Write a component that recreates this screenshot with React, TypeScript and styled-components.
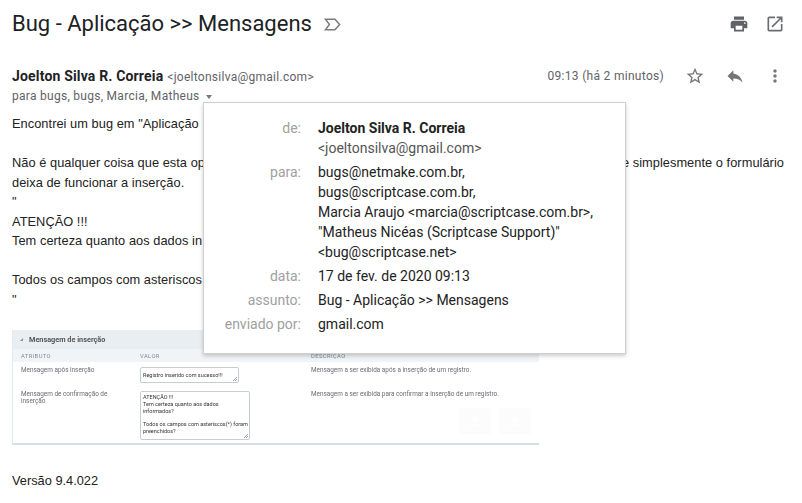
import React from 'react'
import styled, { createGlobalStyle } from 'styled-components'

const GlobalStyle = createGlobalStyle`
    html, body {
        margin: 0;
        padding: 0;
        background: #fff;
    }
`

const Icon: React.FC<{ d: string; color?: string }> = ({ d, color = '#5f6368' }) => (
    <svg width="20" height="20" viewBox="0 0 24 24" fill={color}>
        <path d={d} />
    </svg>
)

const printPath = 'M19 8H5c-1.66 0-3 1.34-3 3v6h4v4h12v-4h4v-6c0-1.66-1.34-3-3-3zm-3 11H8v-5h8v5zm3-7c-.55 0-1-.45-1-1s.45-1 1-1 1 .45 1 1-.45 1-1 1zm-1-9H6v4h12V3z'
const openPath = 'M19 19H5V5h7V3H5c-1.11 0-2 .9-2 2v14c0 1.1.89 2 2 2h14c1.1 0 2-.9 2-2v-7h-2v7zM14 3v2h3.59l-9.83 9.83 1.41 1.41L19 6.41V10h2V3h-7z'
const starPath = 'M22 9.24l-7.19-.62L12 2 9.19 8.63 2 9.24l5.46 4.73L5.82 21 12 17.27 18.18 21l-1.63-7.03L22 9.24zM12 15.4l-3.76 2.27 1-4.28-3.32-2.88 4.38-.38L12 6.1l1.71 4.04 4.38.38-3.32 2.88 1 4.28L12 15.4z'
const replyPath = 'M10 9V5l-7 7 7 7v-4.1c5 0 8.5 1.6 11 5.1-1-5-4-10-11-11z'
const morePath = 'M12 8c1.1 0 2-.9 2-2s-.9-2-2-2-2 .9-2 2 .9 2 2 2zm0 2c-1.1 0-2 .9-2 2s.9 2 2 2 2-.9 2-2-.9-2-2-2zm0 6c-1.1 0-2 .9-2 2s.9 2 2 2 2-.9 2-2-.9-2-2-2z'

const App: React.FC = () => {
    return (
        <Page>
            <GlobalStyle />
            <TitleRow>
                <Title>Bug - Aplicação &gt;&gt; Mensagens</Title>
                <LabelMark width="17" height="13" viewBox="0 0 17 13">
                    <path d="M1.5 1.2h9.5l4.6 5.3-4.6 5.3H1.5l3.9-5.3z" fill="none" stroke="#7c7c7c" strokeWidth="1.5" />
                </LabelMark>
                <TitleActions>
                    <Icon d={printPath} />
                    <Icon d={openPath} color="#6a6e72" />
                </TitleActions>
            </TitleRow>

            <SenderRow>
                <SenderInfo>
                    <SenderLine>
                        <SenderName>Joelton Silva R. Correia</SenderName>
                        <SenderMail>&lt;joeltonsilva@gmail.com&gt;</SenderMail>
                    </SenderLine>
                    <ToLine>
                        para bugs, bugs, Marcia, Matheus
                        <Caret />
                    </ToLine>
                </SenderInfo>
                <Time>09:13 (há 2 minutos)</Time>
                <MessageActions>
                    <Icon d={starPath} color="#767676" />
                    <Icon d={replyPath} color="#767676" />
                    <Icon d={morePath} color="#767676" />
                </MessageActions>
            </SenderRow>

            <Body>
                <Line>Encontrei um bug em "Aplicação</Line>
                <Line>&nbsp;</Line>
                <SplitLine>
                    <span>Não é qualquer coisa que esta op</span>
                    <span>e simplesmente o formulário</span>
                </SplitLine>
                <Line>deixa de funcionar a inserção.</Line>
                <Line>"</Line>
                <Line>ATENÇÃO !!!</Line>
                <Line>Tem certeza quanto aos dados in</Line>
                <Line>&nbsp;</Line>
                <Line>Todos os campos com asteriscos</Line>
                <Line>"</Line>
            </Body>

            <Shot>
                <ShotTitle>
                    <ShotArrow />
                    Mensagem de inserção
                </ShotTitle>
                <ShotHead>
                    <span>ATRIBUTO</span>
                    <span>VALOR</span>
                    <span>DESCRIÇÃO</span>
                </ShotHead>
                <ShotRow>
                    <ShotLabel>Mensagem após inserção</ShotLabel>
                    <ShotArea>Registro inserido com sucesso!!!</ShotArea>
                    <ShotLabel>Mensagem a ser exibida após a inserção de um registro.</ShotLabel>
                </ShotRow>
                <ShotRow>
                    <ShotLabel>Mensagem de confirmação de inserção</ShotLabel>
                    <ShotArea $tall>
                        ATENÇÃO !!!<br />
                        Tem certeza quanto aos dados<br />
                        informados?<br />
                        <br />
                        Todos os campos com asteriscos(*) foram<br />
                        preenchidos?
                    </ShotArea>
                    <ShotLabel>Mensagem a ser exibida para confirmar a inserção de um registro.</ShotLabel>
                </ShotRow>
                <FaintTiles>
                    <FaintTile>
                        <svg width="14" height="14" viewBox="0 0 24 24" fill="#fff">
                            <path d="M19 9h-4V3H9v6H5l7 7 7-7zM5 18v2h14v-2H5z" />
                        </svg>
                    </FaintTile>
                    <FaintTile>
                        <svg width="14" height="14" viewBox="0 0 24 24" fill="#fff">
                            <path d="M9 16h6v-6h4l-7-7-7 7h4zm-4 2h14v2H5z" />
                        </svg>
                    </FaintTile>
                </FaintTiles>
            </Shot>

            <Version>Versão 9.4.022</Version>

            <Popup>
                <PopLabel>de:</PopLabel>
                <PopValue>
                    <strong>Joelton Silva R. Correia</strong>
                    <br />
                    <PopMuted>&lt;joeltonsilva@gmail.com&gt;</PopMuted>
                </PopValue>
                <PopLabel>para:</PopLabel>
                <PopValue>
                    bugs@netmake.com.br,<br />
                    bugs@scriptcase.com.br,<br />
                    Marcia Araujo &lt;marcia@scriptcase.com.br&gt;,<br />
                    "Matheus Nicéas (Scriptcase Support)"<br />
                    &lt;bug@scriptcase.net&gt;
                </PopValue>
                <PopLabel>data:</PopLabel>
                <PopValue>17 de fev. de 2020 09:13</PopValue>
                <PopLabel>assunto:</PopLabel>
                <PopValue>Bug - Aplicação &gt;&gt; Mensagens</PopValue>
                <PopLabel>enviado por:</PopLabel>
                <PopValue>gmail.com</PopValue>
            </Popup>
        </Page>
    )
}

export default App

const Page = styled.div`
    position: relative;
    width: 802px;
    height: 503px;
    overflow: hidden;
    background: #fff;
    font-family: Roboto, "Liberation Sans", sans-serif;
    color: #222;
`

const TitleRow = styled.div`
    display: flex;
    align-items: center;
    height: 28px;
    padding: 10px 17px 0 12px;
`

const Title = styled.h1`
    margin: 0;
    font-size: 22px;
    font-weight: 400;
    line-height: 28px;
    color: #202124;
`

const LabelMark = styled.svg`
    margin-left: 12px;
`

const TitleActions = styled.div`
    display: flex;
    gap: 16px;
    margin-left: auto;
`

const SenderRow = styled.div`
    display: flex;
    align-items: flex-start;
    margin-top: 28px;
    padding: 0 17px 0 12px;
`

const SenderInfo = styled.div`
    flex: 1;
`

const SenderLine = styled.div`
    display: flex;
    align-items: baseline;
    gap: 4px;
    height: 20px;
    line-height: 20px;
`

const SenderName = styled.span`
    font-size: 14px;
    font-weight: 700;
    letter-spacing: 0.17px;
    color: #202124;
`

const SenderMail = styled.span`
    font-size: 12px;
    letter-spacing: 0.27px;
    color: #5f6368;
`

const ToLine = styled.div`
    display: flex;
    align-items: center;
    height: 20px;
    font-size: 12px;
    letter-spacing: 0.28px;
    color: #5f6368;
`

const Caret = styled.span`
    width: 0;
    height: 0;
    margin: 1px 0 0 6px;
    border-left: 3.5px solid transparent;
    border-right: 3.5px solid transparent;
    border-top: 4px solid #777;
`

const Time = styled.div`
    font-size: 12px;
    letter-spacing: 0.3px;
    line-height: 20px;
    color: #5f6368;
`

const MessageActions = styled.div`
    display: flex;
    gap: 20px;
    margin-left: 21px;
`

const Body = styled.div`
    margin-top: 8px;
    padding-left: 12px;
    font-family: "Liberation Sans", Arial, sans-serif;
    font-size: 12.8px;
    letter-spacing: 0.05px;
    line-height: 19.5px;
    color: #222;
`

const Line = styled.div`
    white-space: nowrap;
`

const SplitLine = styled(Line)`
    display: flex;
    justify-content: space-between;
    width: 772px;
`

const Shot = styled.div`
    position: relative;
    width: 527px;
    height: 115px;
    margin: 21px 0 0 12px;
    box-sizing: border-box;
    border-bottom: 2px solid #d6dfe8;
    border-left: 1px solid #e4e9ee;
    font-size: 6.4px;
    color: #4b4b55;
    filter: blur(0.25px);
`

const ShotTitle = styled.div`
    display: flex;
    align-items: center;
    gap: 6px;
    height: 19px;
    padding-left: 7px;
    background: #e9eef3;
    font-size: 7.3px;
    font-weight: 700;
    color: #555;
`

const ShotArrow = styled.span`
    width: 0;
    height: 0;
    border-left: 3px solid transparent;
    border-bottom: 3px solid #8a8f95;
`

const ShotHead = styled.div`
    display: grid;
    grid-template-columns: 119px 171px 1fr;
    align-items: center;
    height: 13px;
    padding-left: 8px;
    background: #f1f4f7;
    font-size: 5.8px;
    letter-spacing: 0.4px;
    color: #7d8b9b;
`

const ShotRow = styled.div`
    display: grid;
    grid-template-columns: 119px 171px 1fr;
    align-items: start;
    padding: 5px 0 0 8px;
    margin-bottom: 3px;
`

const ShotLabel = styled.div`
    width: 100%;
    max-width: 190px;
    line-height: 7.4px;
    color: #6a6a75;

    &:first-child {
        max-width: 92px;
    }

    &:last-child {
        max-width: none;
        white-space: nowrap;
    }
`

const ShotArea = styled.div<{ $tall?: boolean }>`
    position: relative;
    box-sizing: border-box;
    width: ${(p) => (p.$tall ? '110px' : '99px')};
    height: ${(p) => (p.$tall ? '49px' : '16px')};
    padding: ${(p) => (p.$tall ? '2px 2px' : '4px 2px')};
    border: 1px solid #c6ccd2;
    border-radius: 2px;
    background: #fff;
    font-size: 5.5px;
    line-height: 6.8px;
    white-space: nowrap;
    color: #333;

    &::after {
        content: '';
        position: absolute;
        right: 1px;
        bottom: 1px;
        width: 5px;
        height: 5px;
        background: linear-gradient(135deg, transparent 55%, #9aa0a6 55%, #9aa0a6 65%, transparent 65%, transparent 78%, #9aa0a6 78%, #9aa0a6 88%, transparent 88%);
    }
`

const FaintTiles = styled.div`
    position: absolute;
    right: 8px;
    bottom: 9px;
    display: flex;
    gap: 8px;
`

const FaintTile = styled.div`
    display: flex;
    align-items: center;
    justify-content: center;
    width: 32px;
    height: 26px;
    border-radius: 2px;
    background: #fcfcfc;
`

const Version = styled.div`
    margin: 26px 0 0 12px;
    font-family: "Liberation Sans", Arial, sans-serif;
    font-size: 12.8px;
    line-height: 19.5px;
    color: #222;
`

const Popup = styled.div`
    position: absolute;
    top: 102px;
    left: 203px;
    box-sizing: border-box;
    width: 423px;
    height: 252px;
    display: grid;
    grid-template-columns: 97px 1fr;
    column-gap: 17px;
    row-gap: 4px;
    align-content: start;
    padding: 15px 0 0 0;
    background: #fff;
    border: 1px solid #cfcfcf;
    box-shadow: 0 2px 4px rgba(0, 0, 0, 0.2);
    font-size: 14px;
    line-height: 20px;
`

const PopLabel = styled.div`
    text-align: right;
    color: #a0a0a0;
`

const PopValue = styled.div`
    color: #222;

    strong {
        font-weight: 700;
    }
`

const PopMuted = styled.span`
    color: #555;
`
